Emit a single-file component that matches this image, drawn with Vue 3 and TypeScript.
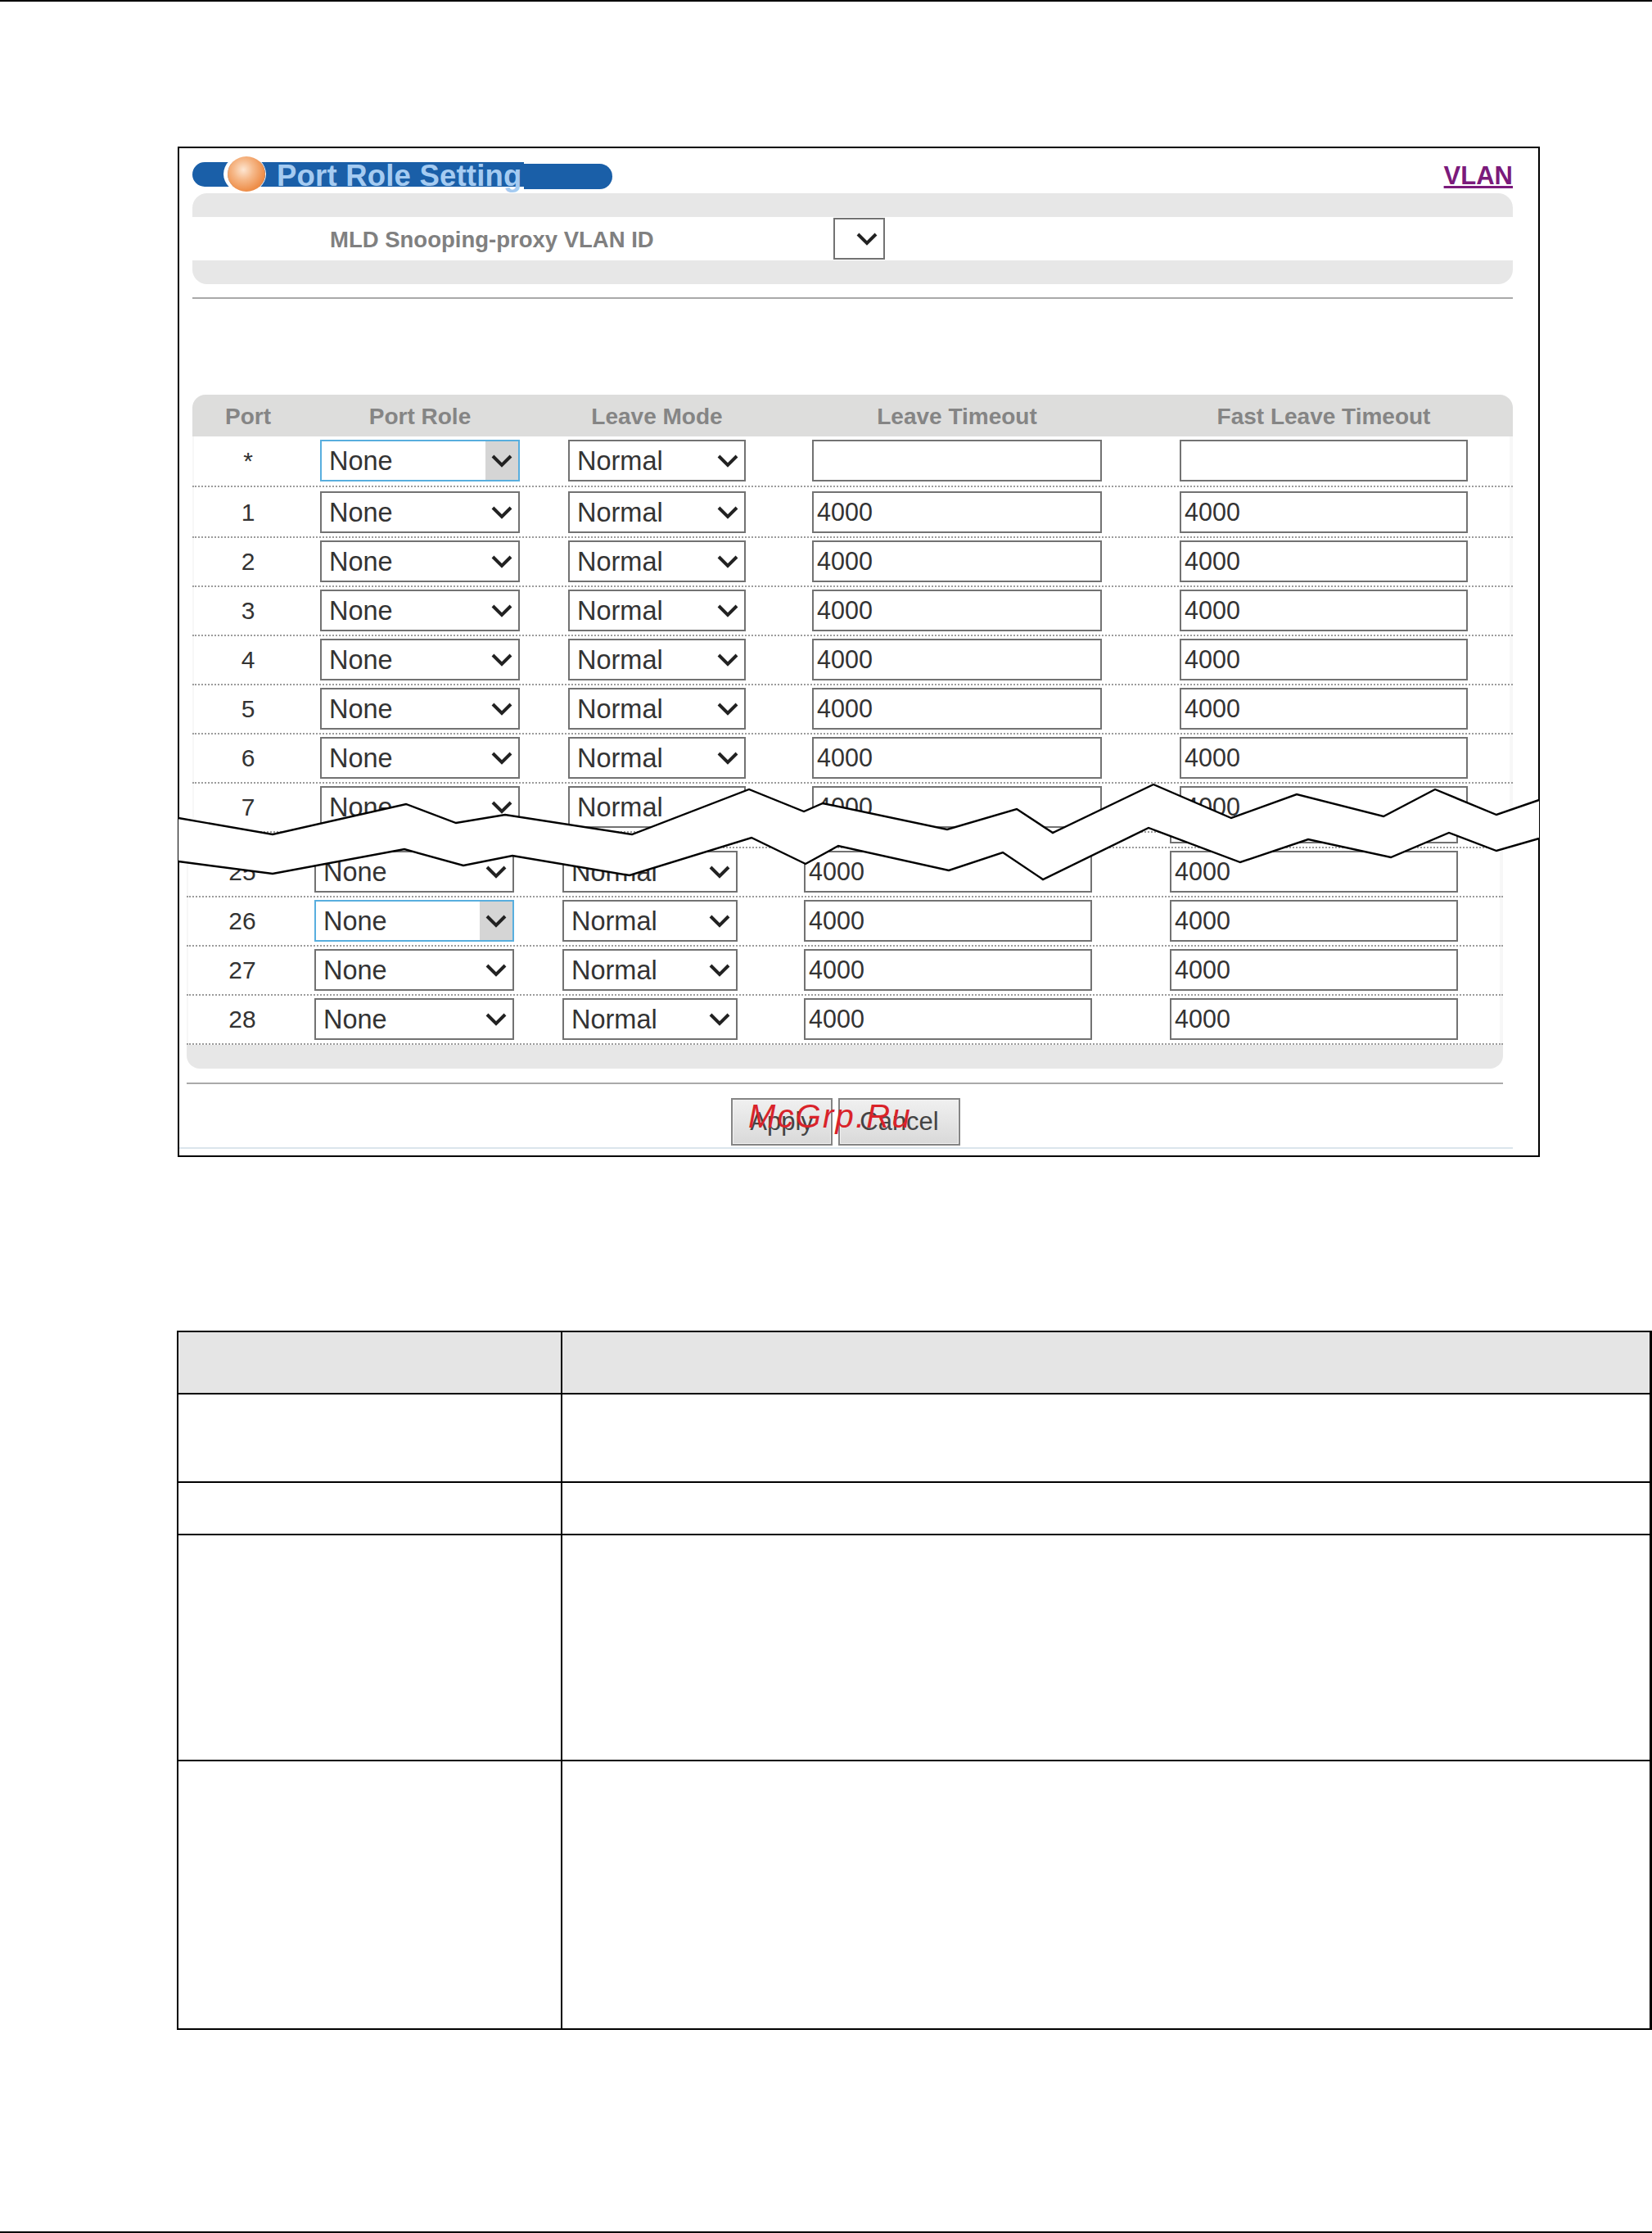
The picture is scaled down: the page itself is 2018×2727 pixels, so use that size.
<script setup lang="ts">
interface Row { port: string; value: string }

const upperRows: Row[] = [
  { port: '*', value: '' },
  ...['1', '2', '3', '4', '5', '6', '7'].map((port) => ({ port, value: '4000' })),
]
const lowerRows: Row[] = ['25', '26', '27', '28'].map((port) => ({ port, value: '4000' }))
const clippedRow: Row = { port: '24', value: '4000' }

const topLine: [number, number][] = [
  [218, 999], [333, 1019], [496, 982], [557, 1005], [617, 995], [772, 1019], [915, 964], [982, 991],
  [1005, 981], [1157, 1013], [1242, 988], [1286, 1017], [1409, 958], [1504, 999], [1584, 970],
  [1690, 997], [1753, 964], [1828, 995], [1880, 977],
]
const bottomLine: [number, number][] = [
  [218, 1052], [333, 1067], [494, 1037], [566, 1057], [626, 1045], [769, 1069], [918, 1023], [984, 1055],
  [1024, 1033], [1159, 1063], [1225, 1041], [1274, 1074], [1403, 1011], [1515, 1053], [1598, 1025],
  [1699, 1047], [1770, 1017], [1828, 1039], [1880, 1024],
]
const toPoints = (line: [number, number][]): string => line.map((p) => p.join(',')).join(' ')
const topPoints = toPoints(topLine)
const bottomPoints = toPoints(bottomLine)
const fillPoints = toPoints([...topLine, ...[...bottomLine].reverse()])

const headers = ['Port', 'Port Role', 'Leave Mode', 'Leave Timeout', 'Fast Leave Timeout']
const tableRows = ['h-head', 'h-a', 'h-b', 'h-c', 'h-d']
</script>

<template>
  <div class="page">
    <div class="frame">
      <div class="title-row">
        <div class="pill">
          <span class="orb"></span>
          <span class="pill-main">Port Role Setting</span>
          <span class="pill-end"></span>
        </div>
        <a class="vlan">VLAN</a>
      </div>

      <div class="vlan-panel">
        <div class="vlan-body">
          <span class="vlan-label">MLD Snooping-proxy VLAN ID</span>
          <div class="sel sel-vlan">
            <select></select>
            <svg class="chev" viewBox="0 0 26 17"><path d="M2 3 L13 14 L24 3" /></svg>
          </div>
        </div>
      </div>
      <div class="rule rule-top"></div>

      <div class="section upper">
        <div class="grid head">
          <span v-for="(h, i) in headers" :key="h" :class="`cell c${i}`">{{ h }}</span>
        </div>
        <div
          v-for="(r, i) in upperRows"
          :key="r.port"
          class="grid row"
          :class="{ 'row-star': i === 0, 'row-one': i === 1 }"
        >
          <span class="cell c0 num">{{ r.port }}</span>
          <div class="sel c1" :class="{ focus: i === 0 }">
            <select><option>None</option></select>
            <svg class="chev" viewBox="0 0 26 17"><path d="M2 3 L13 14 L24 3" /></svg>
          </div>
          <div class="sel c2">
            <select><option>Normal</option></select>
            <svg class="chev" viewBox="0 0 26 17"><path d="M2 3 L13 14 L24 3" /></svg>
          </div>
          <input class="c3 txt" :value="r.value" />
          <input class="c4 txt" :value="r.value" />
        </div>
      </div>

      <div class="section lower">
        <div class="stub">
          <div class="grid row">
            <span class="cell c0 num">{{ clippedRow.port }}</span>
            <div class="sel c1">
              <select><option>None</option></select>
              <svg class="chev" viewBox="0 0 26 17"><path d="M2 3 L13 14 L24 3" /></svg>
            </div>
            <div class="sel c2">
              <select><option>Normal</option></select>
              <svg class="chev" viewBox="0 0 26 17"><path d="M2 3 L13 14 L24 3" /></svg>
            </div>
            <input class="c3 txt" :value="clippedRow.value" />
            <input class="c4 txt" :value="clippedRow.value" />
          </div>
        </div>
        <div v-for="r in lowerRows" :key="r.port" class="grid row">
          <span class="cell c0 num">{{ r.port }}</span>
          <div class="sel c1" :class="{ focus: r.port === '26' }">
            <select><option>None</option></select>
            <svg class="chev" viewBox="0 0 26 17"><path d="M2 3 L13 14 L24 3" /></svg>
          </div>
          <div class="sel c2">
            <select><option>Normal</option></select>
            <svg class="chev" viewBox="0 0 26 17"><path d="M2 3 L13 14 L24 3" /></svg>
          </div>
          <input class="c3 txt" :value="r.value" />
          <input class="c4 txt" :value="r.value" />
        </div>
        <div class="foot"></div>
      </div>

      <div class="rule rule-bottom"></div>
      <div class="buttons">
        <button class="btn btn-apply" type="button">Apply</button>
        <button class="btn btn-cancel" type="button">Cancel</button>
        <span class="mark">McGrp.Ru</span>
      </div>
      <div class="rule-light"></div>
    </div>

    <table class="desc">
      <tbody>
        <tr v-for="h in tableRows" :key="h" :class="h">
          <td class="col-a"></td>
          <td class="col-b"></td>
        </tr>
      </tbody>
    </table>

    <svg class="break" viewBox="0 0 2018 2727">
      <polygon :points="fillPoints" fill="#fff" />
      <polyline :points="topPoints" fill="none" stroke="#000" stroke-width="2.4" />
      <polyline :points="bottomPoints" fill="none" stroke="#000" stroke-width="2.4" />
    </svg>
  </div>
</template>

<style>
html, body { margin: 0; background: #fff; }
</style>

<style scoped>
* { box-sizing: border-box; }
.page {
  position: relative;
  width: 2018px;
  height: 2727px;
  overflow: hidden;
  background: #fff;
  border-top: 2px solid #000;
  border-bottom: 2px solid #000;
  font-family: "Liberation Sans", Arial, sans-serif;
  color: #333;
}
.frame {
  width: 1664px;
  height: 1234px;
  margin: 177px 0 0 217px;
  border: 2px solid #000;
  background: #fff;
}
.title-row {
  display: flex;
  justify-content: space-between;
  align-items: flex-start;
  height: 55px;
  margin: 0 31px 0 16px;
  padding-top: 17px;
}
.pill {
  position: relative;
  display: flex;
  align-items: flex-start;
  width: 513px;
}
.orb {
  position: absolute;
  left: 43px;
  top: -7px;
  width: 46px;
  height: 43px;
  border-radius: 50%;
  background: radial-gradient(circle at 42% 38%, #fde6d2 0%, #f6b98a 32%, #ee8f4b 68%, #df7a33 100%);
  box-shadow: 0 0 0 1px #fff, -4px 0 0 1px #fff;
}
.pill-main {
  width: 405px;
  height: 30px;
  padding-left: 103px;
  background: #1a5fa8;
  border-radius: 15px 0 0 15px;
  color: #a5cbf1;
  font-weight: bold;
  font-size: 36.5px;
  line-height: 33px;
  letter-spacing: 0.2px;
  white-space: nowrap;
}
.pill-end {
  width: 108px;
  height: 31px;
  margin-top: 2px;
  background: #1a5fa8;
  border-radius: 0 16px 16px 0;
}
.vlan {
  margin-top: -1px;
  color: #7b1a7b;
  font-weight: bold;
  font-size: 31px;
  line-height: 36px;
  text-decoration: underline;
}
.vlan-panel {
  width: 1613px;
  height: 111px;
  margin-left: 16px;
  padding: 29px 0;
  background: #e7e7e7;
  border-radius: 18px;
}
.vlan-body {
  display: flex;
  align-items: center;
  height: 53px;
  background: #fff;
}
.vlan-label {
  width: 783px;
  padding: 2px 0 0 168px;
  color: #808080;
  font-weight: bold;
  font-size: 27.5px;
  white-space: nowrap;
}
.rule {
  height: 2px;
  background: #a9a9a9;
}
.rule-top {
  width: 1613px;
  margin: 16px 0 0 16px;
}
.rule-bottom {
  width: 1608px;
  margin: 17px 0 0 9px;
}
.section { display: block; }
.upper {
  --role: 244px;
  --mode: 217px;
  --lt: 354px;
  --flt: 352px;
  width: 1613px;
  margin: 117px 0 0 16px;
}
.upper .grid { grid-template-columns: 156px 303px 298px 449px 407px; }
.lower {
  --role: 244px;
  --mode: 214px;
  --lt: 352px;
  --flt: 352px;
  width: 1608px;
  margin-left: 9px;
}
.lower .grid { grid-template-columns: 156px 303px 295px 447px 407px; }
.grid { display: grid; align-items: start; }
.head {
  height: 51px;
  padding-top: 2px;
  align-items: center;
  background: #dddddc;
  border-radius: 16px 16px 0 0;
}
.head .cell {
  color: #858585;
  font-weight: bold;
  font-size: 28px;
  text-align: center;
  white-space: nowrap;
}
.row {
  height: 60px;
  padding-top: 3px;
  border-bottom: 2px dotted #9c9c9c;
  box-shadow: inset 2px 0 #f7f7f7, inset -4px 0 #f7f7f7;
}
.row-star { height: 62px; padding-top: 4px; }
.row-one { height: 62px; padding-top: 5px; }
.c0 { width: 136px; text-align: center; }
.c1 { width: var(--role); }
.c2 { width: var(--mode); }
.c3 { width: var(--lt); }
.c4 { width: var(--flt); }
.num {
  font-size: 30px;
  line-height: 51px;
  color: #333;
}
.sel {
  position: relative;
  height: 51px;
  border: 2px solid #727272;
  background: #fff;
}
.sel select {
  display: block;
  position: relative;
  z-index: 1;
  width: 100%;
  height: 100%;
  padding: 0 0 0 9px;
  border: 0;
  outline: 0;
  appearance: none;
  background: transparent;
  font-family: inherit;
  font-size: 32.5px;
  color: #333;
}
.chev {
  position: absolute;
  z-index: 2;
  right: 7px;
  top: 15px;
  width: 26px;
  height: 17px;
  pointer-events: none;
}
.chev path {
  fill: none;
  stroke: #222;
  stroke-width: 4;
}
.focus { border-color: #58aede; }
.focus::after {
  content: "";
  position: absolute;
  top: 0;
  right: 0;
  bottom: 0;
  width: 40px;
  background: #d5d5d5;
}
.sel-vlan { width: 63px; }
.txt {
  display: block;
  height: 51px;
  padding: 0 0 0 4px;
  border: 2px solid #727272;
  border-radius: 0;
  outline: 0;
  background: #fff;
  font-family: inherit;
  font-size: 30.5px;
  color: #333;
}
.stub {
  height: 19px;
  overflow: hidden;
}
.stub .row { margin-top: -41px; }
.foot {
  height: 29px;
  background: #e7e7e7;
  border-radius: 0 0 16px 16px;
}
.buttons {
  position: relative;
  display: flex;
  gap: 7px;
  height: 58px;
  margin: 17px 0 0 674px;
}
.btn {
  height: 58px;
  padding: 0;
  border: 2px solid #858585;
  box-shadow: inset 0 0 0 1px #f2f2f2;
  background: linear-gradient(#f0f0f0, #d9d9d9);
  font-family: inherit;
  font-size: 31px;
  color: #444;
}
.btn-apply { width: 124px; }
.btn-cancel { width: 149px; }
.mark {
  position: absolute;
  left: 21px;
  top: 0;
  color: #d9232a;
  font-style: italic;
  font-size: 40px;
  letter-spacing: 2.2px;
  white-space: nowrap;
}
.rule-light {
  width: 1629px;
  height: 2px;
  margin: 2px 0 0;
  background: #dbe5ec;
}
.desc {
  width: 1802px;
  margin: 212px 0 0 216px;
  table-layout: fixed;
  border-collapse: collapse;
}
.desc td {
  padding: 0;
  border: 2px solid #000;
}
.col-a { width: 469px; }
.desc td.col-b { border-right-width: 3px; }
.h-head td { height: 76px; background: #e5e5e5; }
.h-a td { height: 108px; }
.h-b td { height: 64px; }
.h-c td { height: 276px; }
.h-d td { height: 328px; }
.break {
  position: absolute;
  z-index: 5;
  left: 0;
  top: -2px;
  width: 2018px;
  height: 2727px;
  pointer-events: none;
}
</style>
